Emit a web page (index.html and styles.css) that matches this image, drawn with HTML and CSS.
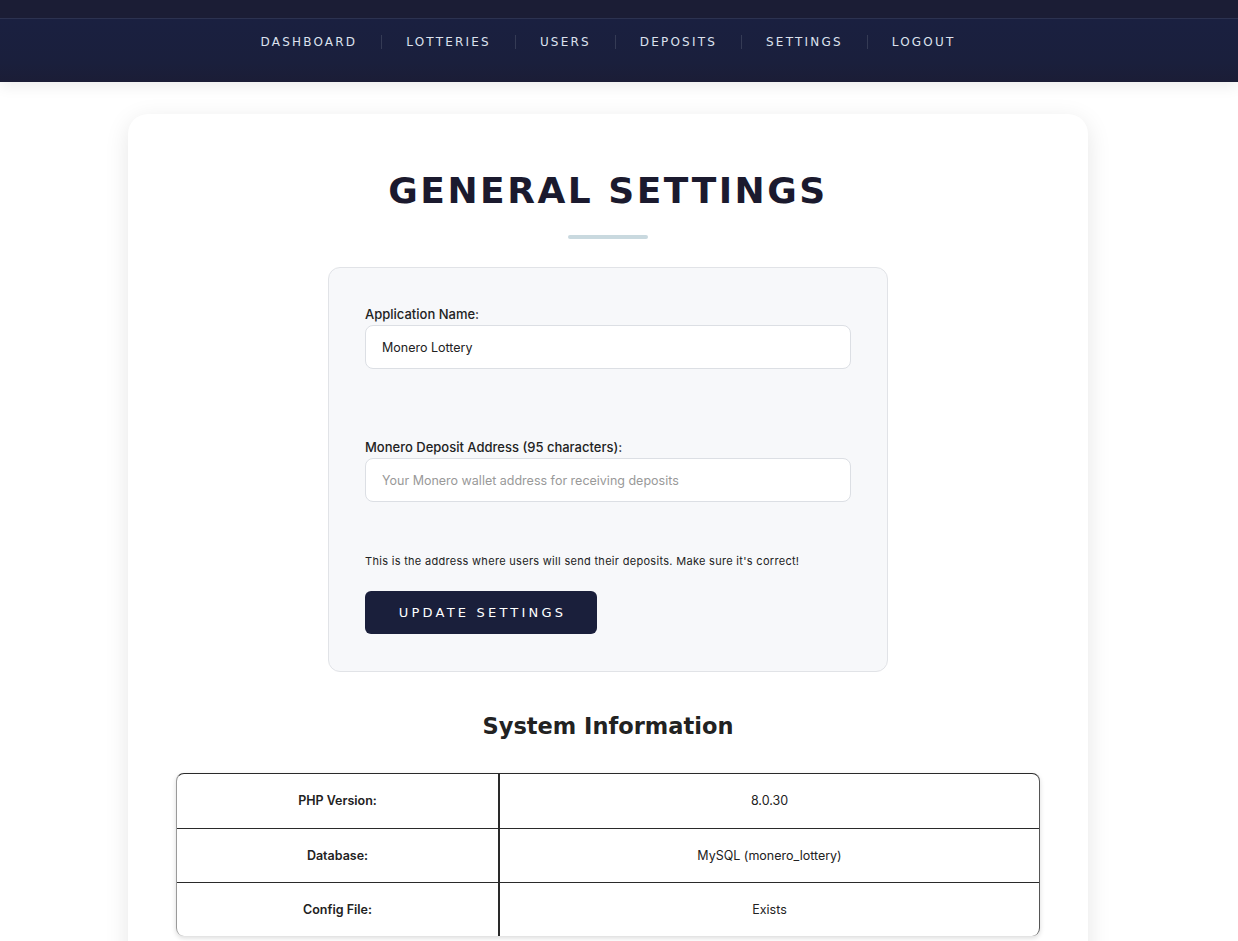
FILE: index.html
```html
<!DOCTYPE html>
<html lang="en">
<head>
<meta charset="utf-8">
<title>General Settings</title>
<link rel="stylesheet" href="styles.css">
</head>
<body>
<header class="site-header">
  <div class="header-top"></div>
  <nav class="main-nav">
    <a href="#" class="nav-link">Dashboard</a>
    <span class="nav-sep"></span>
    <a href="#" class="nav-link">Lotteries</a>
    <span class="nav-sep"></span>
    <a href="#" class="nav-link">Users</a>
    <span class="nav-sep"></span>
    <a href="#" class="nav-link">Deposits</a>
    <span class="nav-sep"></span>
    <a href="#" class="nav-link">Settings</a>
    <span class="nav-sep"></span>
    <a href="#" class="nav-link">Logout</a>
  </nav>
</header>

<main class="page">
  <section class="card">
    <h1 class="page-title">General Settings</h1>
    <div class="title-bar"></div>

    <form class="settings-form">
      <div class="form-group">
        <label class="form-label">Application Name:</label>
        <input class="form-input" type="text" value="Monero Lottery">
      </div>
      <div class="form-group">
        <label class="form-label">Monero Deposit Address (95 characters):</label>
        <input class="form-input" type="text" placeholder="Your Monero wallet address for receiving deposits">
      </div>
      <p class="help-text">This is the address where users will send their deposits. Make sure it's correct!</p>
      <button type="button" class="btn-primary">Update Settings</button>
    </form>

    <h2 class="section-title">System Information</h2>
    <div class="info-table-wrap">
      <table class="info-table">
        <tr>
          <th>PHP Version:</th>
          <td>8.0.30</td>
        </tr>
        <tr>
          <th>Database:</th>
          <td>MySQL (monero_lottery)</td>
        </tr>
        <tr>
          <th>Config File:</th>
          <td>Exists</td>
        </tr>
      </table>
    </div>
  </section>
</main>
</body>
</html>
```

FILE: styles.css
```css
* { box-sizing: border-box; }

html, body {
  margin: 0;
  padding: 0;
}

body {
  background: #ffffff;
  font-family: "Inter", "Liberation Sans", sans-serif;
  color: #222;
}

.site-header {
  background: #1a1f3b;
  box-shadow: 0 4px 14px rgba(0, 0, 0, 0.08);
}

.header-top {
  height: 19px;
  background: #1b1d35;
  border-bottom: 1px solid #2c3250;
}

.main-nav {
  height: 63px;
  padding: 0 22px 18px 0;
  display: flex;
  align-items: center;
  justify-content: center;
  background: linear-gradient(180deg, #1a2040 0%, #1a1f3c 70%, #1b1d36 100%);
}

.nav-link {
  font-family: "DejaVu Sans", sans-serif;
  font-size: 12px;
  letter-spacing: 2.2px;
  text-transform: uppercase;
  color: #dde2ee;
  text-decoration: none;
}

.nav-sep {
  width: 1px;
  height: 14px;
  background: #353b55;
  margin: 0 24px 0 24px;
}

.page {
  padding: 32px 22px 0 0;
  display: flex;
  justify-content: center;
}

.card {
  width: 960px;
  background: #fff;
  border-radius: 20px;
  box-shadow: 0 6px 24px rgba(0, 0, 0, 0.1);
  padding: 56px 48px 60px;
  display: flex;
  flex-direction: column;
  align-items: center;
}

.page-title {
  margin: 0;
  font-family: "DejaVu Sans", sans-serif;
  font-weight: bold;
  font-size: 36px;
  line-height: 42px;
  letter-spacing: 2.5px;
  text-transform: uppercase;
  color: #1b1a2e;
}

.title-bar {
  width: 80px;
  height: 4px;
  border-radius: 2px;
  background: #c9d9df;
  margin-top: 23px;
}

.settings-form {
  width: 560px;
  margin-top: 28px;
  background: #f7f8fa;
  border: 1px solid #e1e3e7;
  border-radius: 12px;
  padding: 38px 36px 37px;
  display: flex;
  flex-direction: column;
  align-items: flex-start;
}

.form-group {
  width: 100%;
  margin-bottom: 70px;
}

.form-group + .form-group {
  margin-bottom: 52px;
}

.form-label {
  display: block;
  font-size: 13px;
  line-height: 16px;
  font-weight: 500;
  color: #222;
  margin-bottom: 3px;
}

.form-input {
  display: block;
  width: 100%;
  height: 44px;
  border: 1px solid #dcdfe4;
  border-radius: 8px;
  background: #fff;
  padding: 0 16px;
  font-family: "Inter", "Liberation Sans", sans-serif;
  font-size: 12.5px;
  color: #222;
}

.form-input::placeholder {
  color: #999;
}

.help-text {
  margin: 0;
  font-size: 11px;
  line-height: 14px;
  letter-spacing: 0.3px;
  color: #222;
}

.btn-primary {
  margin-top: 23px;
  width: 232px;
  height: 43px;
  border: none;
  border-radius: 6px;
  background: #1a1f3b;
  color: #fff;
  font-family: "DejaVu Sans", sans-serif;
  font-size: 13px;
  letter-spacing: 3.2px;
  text-transform: uppercase;
  padding: 0 0 0 3px;
}

.section-title {
  margin: 39px 0 0;
  font-family: "DejaVu Sans", sans-serif;
  font-weight: bold;
  font-size: 22.5px;
  line-height: 30px;
  color: #222;
}

.info-table-wrap {
  width: 100%;
  margin-top: 32px;
  border-radius: 8px;
  overflow: hidden;
  border-top: 1px solid #2a2a2a;
  border-left: 1px solid #9a9a9a;
  border-right: 1px solid #555;
  box-shadow: 0 2px 5px rgba(0, 0, 0, 0.15);
}

.info-table {
  width: 100%;
  border-collapse: collapse;
  font-size: 12.5px;
  color: #222;
}

.info-table th,
.info-table td {
  height: 54px;
  text-align: center;
  vertical-align: middle;
  border-bottom: 1px solid #2a2a2a;
  padding: 0 12px;
}

.info-table tr:last-child th,
.info-table tr:last-child td {
  border-bottom: none;
}

.info-table th {
  width: 322px;
  font-weight: 600;
  border-right: 2px solid #2a2a2a;
}

.info-table td {
  font-weight: 400;
}
```
